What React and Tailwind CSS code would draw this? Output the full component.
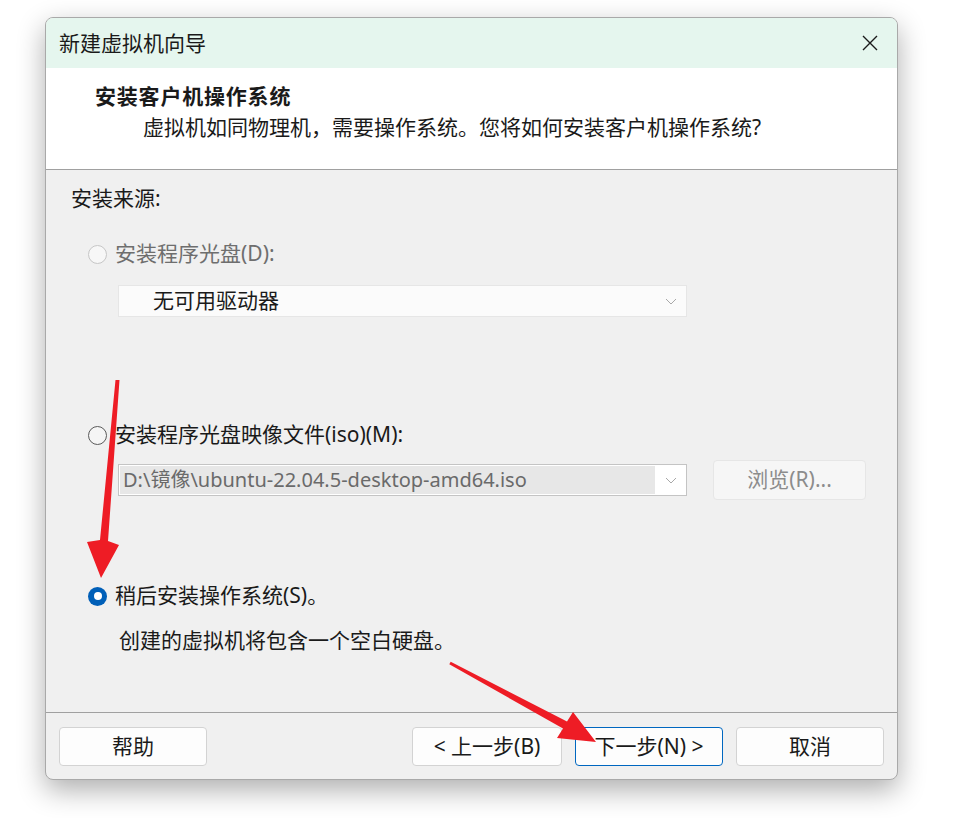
import React from 'react';

const Radio = ({ checked, disabled }) => {
  if (checked) {
    return (
      <span className="flex h-[19px] w-[19px] shrink-0 items-center justify-center rounded-full bg-[#005fb8]">
        <span className="h-[8px] w-[8px] rounded-full bg-white"></span>
      </span>
    );
  }
  return (
    <span
      className={
        disabled
          ? 'h-[19px] w-[19px] shrink-0 rounded-full border border-[#c6c6c6] bg-[#f7f7f7]'
          : 'h-[19px] w-[19px] shrink-0 rounded-full border border-[#5a5a5a] bg-[#f5f5f5]'
      }
    ></span>
  );
};

const Chevron = () => (
  <svg width="12" height="7" viewBox="0 0 12 7" className="shrink-0">
    <path d="M1 1 L6 6 L11 1" fill="none" stroke="#a8a8a8" strokeWidth="1" />
  </svg>
);

const Button = ({ children, primary, wide }) => (
  <button
    className={
      'flex h-[39px] items-center justify-center rounded-[4px] bg-[#fdfdfd] text-[21px] text-[#1a1a1a] ' +
      (wide ? 'w-[150px] ' : 'w-[148px] ') +
      (primary ? 'border border-[#0067c0]' : 'border border-[#d3d3d3]')
    }
  >
    {children}
  </button>
);

export default function App() {
  return (
    <div className="relative h-[818px] w-[974px] overflow-hidden bg-white font-['Noto_Sans','Noto_Sans_CJK_SC',sans-serif] text-[#1a1a1a]">
      <div className="ml-[45px] mt-[17px] flex h-[763px] w-[853px] flex-col overflow-hidden rounded-[8px] border border-[#a9a9a9] bg-[#f0f0f0] shadow-[0_10px_28px_rgba(0,0,0,0.32)]">
        {/* title bar */}
        <div className="flex h-[50px] shrink-0 items-center justify-between bg-[#e5f6ee] pl-[13px] pr-[19px]">
          <span className="text-[21px] leading-[28px]">新建虚拟机向导</span>
          <svg width="16" height="16" viewBox="0 0 16 16">
            <path d="M1 1 L15 15 M15 1 L1 15" stroke="#1a1a1a" strokeWidth="1.4" />
          </svg>
        </div>

        {/* header */}
        <div className="h-[102px] shrink-0 border-b border-[#a0a0a0] bg-white pl-[49px] pt-[14px]">
          <div className="text-[21px] font-bold leading-[28px] tracking-[0.8px]">安装客户机操作系统</div>
          <div className="ml-[48px] mt-[3px] text-[21px] leading-[28px]">
            虚拟机如同物理机，需要操作系统。您将如何安装客户机操作系统?
          </div>
        </div>

        {/* body */}
        <div className="flex flex-1 flex-col border-b border-[#a0a0a0] pl-[25px] pt-[14px]">
          <div className="text-[21px] leading-[28px]">安装来源:</div>

          <div className="ml-[17px] mt-[28px] flex h-[28px] items-center gap-[8px]">
            <Radio disabled />
            <span className="text-[21px] text-[#6e6e6e]">安装程序光盘(D):</span>
          </div>
          <div className="ml-[47px] mt-[17px] flex h-[32px] w-[569px] items-center justify-between border border-[#e6e6e6] bg-[#fbfbfb] pl-[34px] pr-[9px]">
            <span className="text-[21px]">无可用驱动器</span>
            <Chevron />
          </div>

          <div className="ml-[17px] mt-[104px] flex h-[28px] items-center gap-[8px]">
            <Radio />
            <span className="text-[21px]">安装程序光盘映像文件(iso)(M):</span>
          </div>
          <div className="ml-[47px] mt-[11px] flex h-[40px] items-center gap-[26px]">
            <div className="flex h-[32px] w-[569px] items-center border border-[#c4c4c4] bg-white p-[1px] pr-[9px]">
              <div className="flex h-full w-[535px] items-center bg-[#e7e7e7] pl-[3px]">
                <span className="text-[20px] text-[#6a6a6a]">D:\镜像\ubuntu-22.04.5-desktop-amd64.iso</span>
              </div>
              <div className="flex flex-1 justify-end">
                <Chevron />
              </div>
            </div>
            <div className="flex h-[40px] w-[153px] items-center justify-center rounded-[4px] border border-[#e6e6e6] bg-[#f6f6f6] text-[21px] text-[#8c8c8c]">
              浏览(R)...
            </div>
          </div>

          <div className="ml-[17px] mt-[82px] flex h-[28px] items-center gap-[8px]">
            <Radio checked />
            <span className="text-[21px]">稍后安装操作系统(S)。</span>
          </div>
          <div className="ml-[48px] mt-[16px] text-[21px] leading-[28px]">
            创建的虚拟机将包含一个空白硬盘。
          </div>
        </div>

        {/* footer */}
        <div className="flex h-[66px] shrink-0 items-start justify-between px-[13px] pt-[14px]">
          <Button>帮助</Button>
          <div className="flex gap-[13px]">
            <Button wide>&lt; 上一步(B)</Button>
            <Button primary>下一步(N) &gt;</Button>
            <Button>取消</Button>
          </div>
        </div>
      </div>

      {/* annotation arrows */}
      <svg className="pointer-events-none absolute left-0 top-0" width="974" height="818" viewBox="0 0 974 818">
        <polygon
          points="115.5,380 119.5,380 108,541 119,545 101,578 87,542 100,540"
          fill="#ee1c25"
        />
        <polygon
          points="450.7,661.7 567,721.5 573,712 596,742 557,738 563,728.5 449.3,664.3"
          fill="#ee1c25"
        />
      </svg>
    </div>
  );
}
